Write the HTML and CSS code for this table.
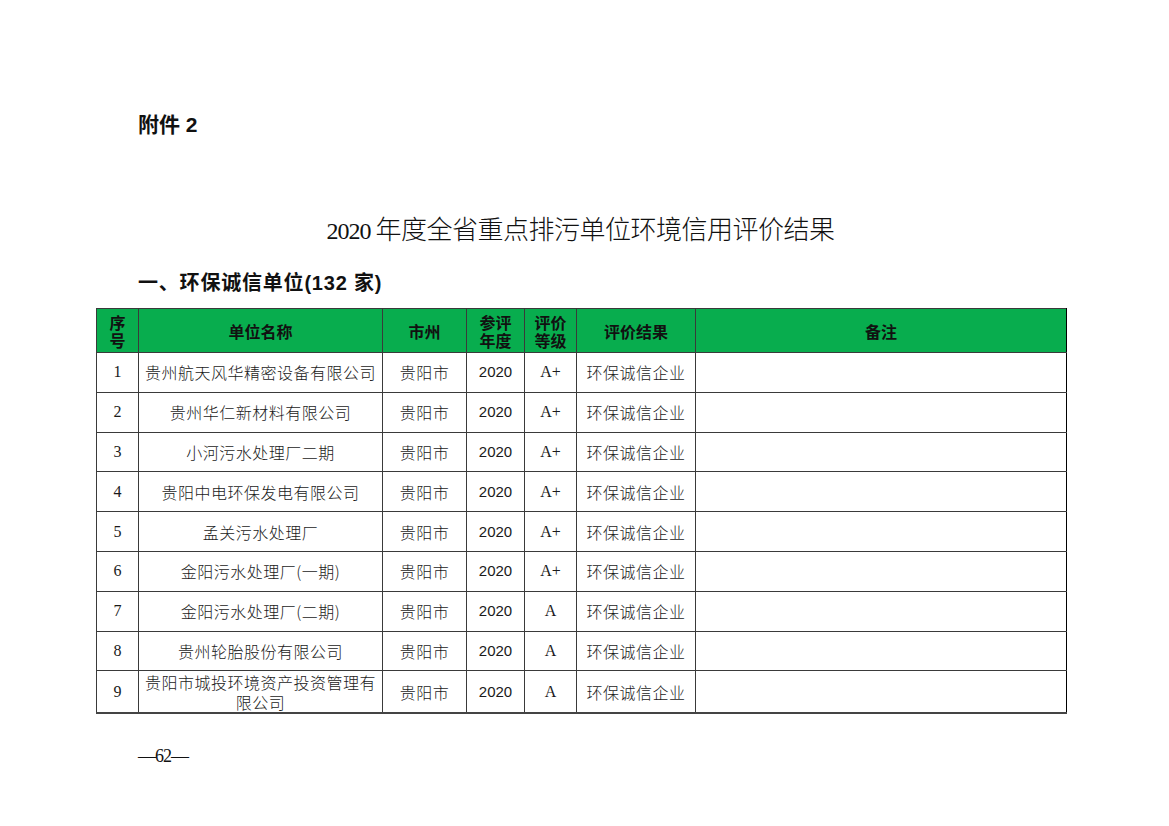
FILE: index.html
```html
<!DOCTYPE html>
<html lang="zh">
<head>
<meta charset="utf-8">
<title>附件2</title>
<link rel="stylesheet" href="styles.css">
</head>
<body>
<div class="page">
  <div class="attach">附件 2</div>
  <h1 class="title"><span class="num">2020</span> 年度全省重点排污单位环境信用评价结果</h1>
  <h2 class="section">一、环保诚信单位(132 家)</h2>
  <table class="grid">
    <colgroup>
      <col class="c1"><col class="c2"><col class="c3"><col class="c4"><col class="c5"><col class="c6"><col class="c7">
    </colgroup>
    <thead>
      <tr>
        <th><span class="ln">序</span><span class="ln">号</span></th>
        <th>单位名称</th>
        <th>市州</th>
        <th><span class="ln">参评</span><span class="ln">年度</span></th>
        <th><span class="ln">评价</span><span class="ln">等级</span></th>
        <th>评价结果</th>
        <th>备注</th>
      </tr>
    </thead>
    <tbody>
      <tr><td class="n">1</td><td>贵州航天风华精密设备有限公司</td><td>贵阳市</td><td class="y">2020</td><td class="g">A+</td><td>环保诚信企业</td><td></td></tr>
      <tr><td class="n">2</td><td>贵州华仁新材料有限公司</td><td>贵阳市</td><td class="y">2020</td><td class="g">A+</td><td>环保诚信企业</td><td></td></tr>
      <tr><td class="n">3</td><td>小河污水处理厂二期</td><td>贵阳市</td><td class="y">2020</td><td class="g">A+</td><td>环保诚信企业</td><td></td></tr>
      <tr><td class="n">4</td><td>贵阳中电环保发电有限公司</td><td>贵阳市</td><td class="y">2020</td><td class="g">A+</td><td>环保诚信企业</td><td></td></tr>
      <tr><td class="n">5</td><td>孟关污水处理厂</td><td>贵阳市</td><td class="y">2020</td><td class="g">A+</td><td>环保诚信企业</td><td></td></tr>
      <tr><td class="n">6</td><td>金阳污水处理厂(一期)</td><td>贵阳市</td><td class="y">2020</td><td class="g">A+</td><td>环保诚信企业</td><td></td></tr>
      <tr><td class="n">7</td><td>金阳污水处理厂(二期)</td><td>贵阳市</td><td class="y">2020</td><td class="g">A</td><td>环保诚信企业</td><td></td></tr>
      <tr><td class="n">8</td><td>贵州轮胎股份有限公司</td><td>贵阳市</td><td class="y">2020</td><td class="g">A</td><td>环保诚信企业</td><td></td></tr>
      <tr class="last"><td class="n">9</td><td class="wrap">贵阳市城投环境资产投资管理有限公司</td><td>贵阳市</td><td class="y">2020</td><td class="g">A</td><td>环保诚信企业</td><td></td></tr>
    </tbody>
  </table>
  <div class="footer">—62—</div>
</div>
</body>
</html>
```
FILE: styles.css
```css
html, body {
  margin: 0;
  padding: 0;
  background: #ffffff;
}
body {
  font-family: "Noto Sans CJK SC", sans-serif;
  color: #111;
}
.page {
  width: 1169px;
  height: 826px;
  box-sizing: border-box;
  padding: 111px 0 0 96px;
}
.attach {
  margin-left: 42px;
  font-family: "Liberation Sans", "Noto Sans CJK SC", sans-serif;
  font-size: 21px;
  line-height: 28px;
  font-weight: 700;
}
.title {
  width: 969px;
  margin: 72px 0 0 0;
  text-align: center;
  font-size: 26px;
  line-height: 34px;
  font-weight: 300;
  letter-spacing: -0.5px;
}
.title .num {
  font-family: "Liberation Serif", serif;
  font-size: 24px;
  letter-spacing: -1px;
}
.section {
  margin: 23px 0 0 42px;
  font-family: "Liberation Sans", "Noto Sans CJK SC", sans-serif;
  font-size: 20px;
  line-height: 24px;
  font-weight: 700;
  letter-spacing: 0.8px;
}
.grid {
  margin-top: 13px;
  width: 970px;
  border-collapse: collapse;
  table-layout: fixed;
}
.c1 { width: 42px; }
.c2 { width: 244px; }
.c3 { width: 84px; }
.c4 { width: 58px; }
.c5 { width: 52px; }
.c6 { width: 119px; }
.c7 { width: 371px; }
.grid th, .grid td {
  border: 1px solid #3a3a3a;
  text-align: center;
  vertical-align: middle;
  padding: 0;
}
.grid th:last-child, .grid td:last-child {
  border-right-color: #000;
}
.grid th {
  background: #08ad4e;
  height: 43px;
  font-size: 16px;
  line-height: 20px;
  font-weight: 700;
  color: #111;
}
.grid th .ln {
  display: block;
  line-height: 18px;
}
.grid td {
  height: 38.8px;
  font-size: 16px;
  line-height: 18px;
  font-weight: 300;
  letter-spacing: 0.5px;
  color: #1a1a1a;
}
.grid td.n, .grid td.g {
  font-family: "Liberation Serif", serif;
  font-size: 16px;
  letter-spacing: 0;
}
.grid td.y {
  font-family: "Liberation Sans", sans-serif;
  font-size: 15px;
  letter-spacing: 0;
}
.grid tr.last td {
  height: 40px;
  border-bottom: 2px solid #444;
}
.grid td.wrap {
  line-height: 20px;
  padding: 1px 2px 0;
}
.footer {
  margin: 30px 0 0 42px;
  font-family: "Liberation Serif", serif;
  font-size: 18px;
  line-height: 24px;
  letter-spacing: -1px;
}
```
